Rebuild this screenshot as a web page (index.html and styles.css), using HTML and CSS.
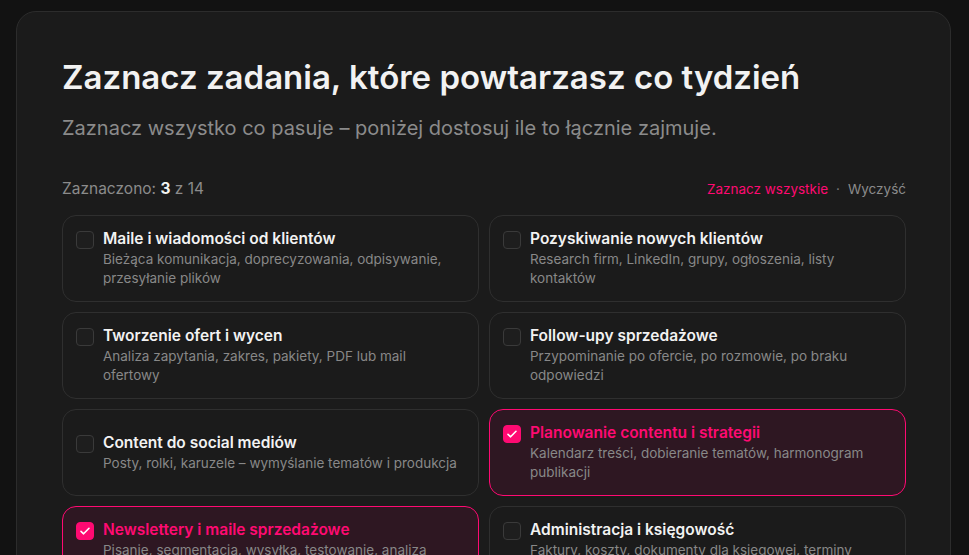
FILE: index.html
```html
<!DOCTYPE html>
<html lang="pl">
<head>
<meta charset="utf-8">
<title>Zadania</title>
<link rel="stylesheet" href="styles.css">
</head>
<body>
<main class="panel">
  <h1 class="title">Zaznacz zadania, które powtarzasz co tydzień</h1>
  <p class="subtitle">Zaznacz wszystko co pasuje – poniżej dostosuj ile to łącznie zajmuje.</p>
  <div class="toolbar">
    <div class="count">Zaznaczono: <strong>3</strong> z 14</div>
    <div class="actions"><span class="all">Zaznacz wszystkie</span><span class="dot">·</span><span class="clear">Wyczyść</span></div>
  </div>
  <div class="grid">
    <div class="task"><div class="inner">
      <span class="box"></span>
      <div class="text"><div class="name">Maile i wiadomości od klientów</div><div class="desc">Bieżąca komunikacja, doprecyzowania, odpisywanie, przesyłanie plików</div></div>
    </div></div>
    <div class="task"><div class="inner">
      <span class="box"></span>
      <div class="text"><div class="name">Pozyskiwanie nowych klientów</div><div class="desc">Research firm, LinkedIn, grupy, ogłoszenia, listy kontaktów</div></div>
    </div></div>
    <div class="task"><div class="inner">
      <span class="box"></span>
      <div class="text"><div class="name">Tworzenie ofert i wycen</div><div class="desc">Analiza zapytania, zakres, pakiety, PDF lub mail ofertowy</div></div>
    </div></div>
    <div class="task"><div class="inner">
      <span class="box"></span>
      <div class="text"><div class="name">Follow-upy sprzedażowe</div><div class="desc">Przypominanie po ofercie, po rozmowie, po braku odpowiedzi</div></div>
    </div></div>
    <div class="task"><div class="inner">
      <span class="box"></span>
      <div class="text"><div class="name">Content do social mediów</div><div class="desc">Posty, rolki, karuzele – wymyślanie tematów i produkcja</div></div>
    </div></div>
    <div class="task selected"><div class="inner">
      <span class="box"><svg viewBox="0 0 18 18" width="18" height="18"><path d="M5 9.3l2.6 2.5L13 6.3" fill="none" stroke="#fff" stroke-width="1.6" stroke-linecap="round" stroke-linejoin="round"/></svg></span>
      <div class="text"><div class="name">Planowanie contentu i strategii</div><div class="desc">Kalendarz treści, dobieranie tematów, harmonogram publikacji</div></div>
    </div></div>
    <div class="task selected"><div class="inner">
      <span class="box"><svg viewBox="0 0 18 18" width="18" height="18"><path d="M5 9.3l2.6 2.5L13 6.3" fill="none" stroke="#fff" stroke-width="1.6" stroke-linecap="round" stroke-linejoin="round"/></svg></span>
      <div class="text"><div class="name">Newslettery i maile sprzedażowe</div><div class="desc">Pisanie, segmentacja, wysyłka, testowanie, analiza wyników</div></div>
    </div></div>
    <div class="task"><div class="inner">
      <span class="box"></span>
      <div class="text"><div class="name">Administracja i księgowość</div><div class="desc">Faktury, koszty, dokumenty dla księgowej, terminy płatności</div></div>
    </div></div>
  </div>
</main>
</body>
</html>
```

FILE: styles.css
```css
* { box-sizing: border-box; }
html, body { margin: 0; background: #121212; }
body {
  padding: 11px 18px 0 16px;
  font-family: Inter, "Noto Sans", sans-serif;
  color: #ececec;
  overflow: hidden;
  height: 555px;
}
.panel {
  background: #1b1b1b;
  border: 1px solid #2c2c2c;
  border-radius: 20px;
  padding: 45px 44px 40px 45px;
  min-height: 700px;
}
.title {
  margin: 0;
  font-size: 33px;
  font-weight: 600;
  letter-spacing: 0;
  line-height: 40px;
  color: #f2f2f2;
}
.subtitle {
  margin: 17px 0 0;
  font-size: 20px;
  line-height: 28px;
  color: #8b8b8b;
}
.toolbar {
  margin-top: 37px;
  display: flex;
  justify-content: space-between;
  align-items: center;
  font-size: 15.5px;
  line-height: 20px;
}
.count { color: #8b8b8b; }
.count strong { color: #f2f2f2; font-weight: 700; }
.actions { font-size: 13.5px; }
.all { color: #ff0a72; }
.dot { color: #777; margin: 0 8px; }
.clear { color: #8b8b8b; }
.grid {
  margin-top: 16px;
  display: grid;
  grid-template-columns: 1fr 1fr;
  gap: 10px;
}
.task {
  display: flex;
  align-items: center;
  padding: 13px 13px;
  min-height: 87px;
  border: 1px solid #2f2f2f;
  border-radius: 14px;
  background: #1b1b1b;
}
.inner {
  display: flex;
  align-items: flex-start;
  gap: 9px;
  width: 100%;
}
.text { flex: 1; }
.box {
  flex: none;
  width: 18px;
  height: 18px;
  border: 1px solid #3a3a3a;
  border-radius: 4px;
  background: #1e1e1e;
  margin-top: 2px;
  display: flex;
}
.name {
  font-size: 15.5px;
  font-weight: 600;
  line-height: 20px;
  color: #f2f2f2;
}
.desc {
  margin-top: 1px;
  font-size: 13.5px;
  line-height: 19px;
  color: #888;
}
.selected {
  border-color: #ff0a72;
  background: #2e1722;
}
.selected .name { color: #ff0a72; }
.selected .box { background: #ff0a72; border-color: #ff0a72; }
.selected .box svg { margin: -1px; }
```
